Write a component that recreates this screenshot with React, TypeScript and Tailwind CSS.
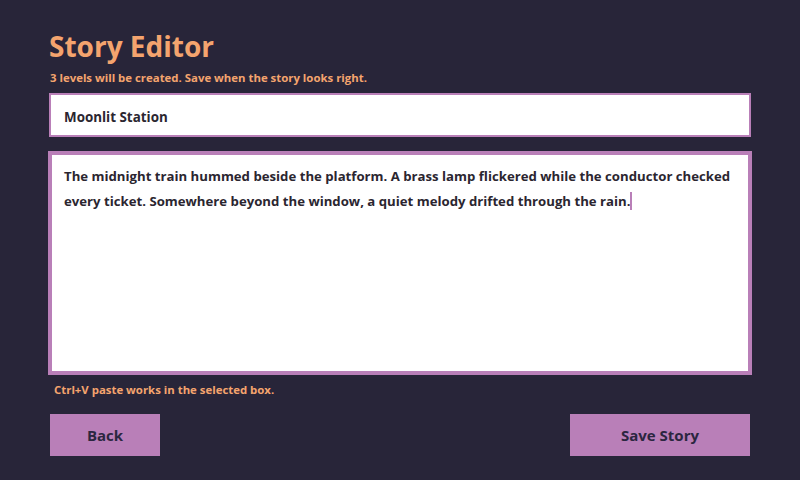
import React from "react";

export default function App() {
  const font = { fontFamily: '"Open Sans", "Noto Sans", sans-serif' };
  return (
    <div className="w-[800px] h-[480px] bg-[#282539] flex flex-col px-[48px] overflow-hidden" style={font}>
      <h1 className="mt-[28px] ml-[1px] h-[36px] leading-[36px] text-[28px] font-bold text-[#f4a46e]">Story Editor</h1>
      <p className="mt-[7px] ml-[2px] h-[14px] leading-[14px] text-[11.4px] font-bold text-[#f4a46e]">
        3 levels will be created. Save when the story looks right.
      </p>
      <div className="mt-[8px] ml-[1px] w-[702px] h-[44px] bg-white border-2 border-[#b97fb8] flex items-center px-[13px] pt-[4px]">
        <span className="text-[13.4px] font-bold text-[#2b2630]">Moonlit Station</span>
      </div>
      <div className="mt-[14px] w-[704px] h-[224px] bg-white border-4 border-[#b97fb8] px-[12px] pt-[9px]">
        <p className="text-[13.2px] leading-[25px] font-bold text-[#2b2630]">
          The midnight train hummed beside the platform. A brass lamp flickered while the conductor checked every ticket. Somewhere beyond the window, a quiet melody drifted through the rain.
          <span className="inline-block w-[2px] h-[18px] bg-[#b97fb8] align-[-4px]"></span>
        </p>
      </div>
      <p className="mt-[8px] ml-[6px] h-[14px] leading-[14px] text-[11.4px] font-bold text-[#f4a46e]">
        Ctrl+V paste works in the selected box.
      </p>
      <div className="mt-[17px] flex justify-between ml-[2px] w-[700px]">
        <button className="w-[110px] h-[42px] bg-[#b97fb8] text-[15px] font-bold text-[#2b2640]">Back</button>
        <button className="w-[180px] h-[42px] bg-[#b97fb8] text-[15px] font-bold text-[#2b2640]">Save Story</button>
      </div>
    </div>
  );
}
